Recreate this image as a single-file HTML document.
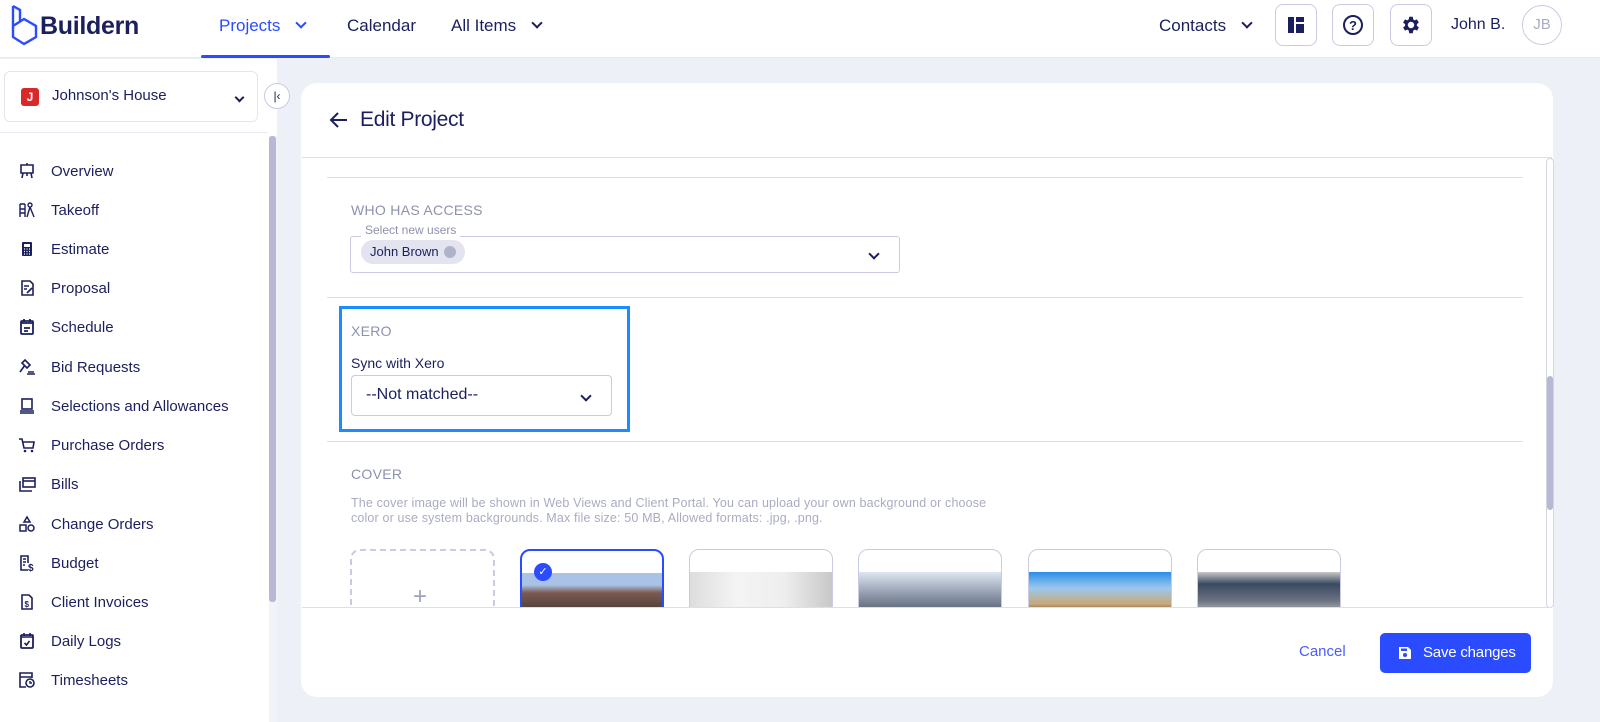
<!DOCTYPE html>
<html><head><meta charset="utf-8">
<style>
*{box-sizing:border-box;margin:0;padding:0}
body{width:1600px;height:722px;overflow:hidden;background:#eef0f8;font-family:"Liberation Sans",sans-serif;color:#1c1f5e;position:relative}
.abs{position:absolute}
.hdr{left:0;top:0;width:1600px;height:58px;background:#fff;border-bottom:1px solid #e6e8f2}
.nav{font-size:17px;top:16px}
.chev{display:inline-block;width:8px;height:8px;border-right:2px solid currentColor;border-bottom:2px solid currentColor;transform:rotate(45deg)}
.ib{width:42px;height:42px;border:1px solid #c9cbe4;border-radius:8px;top:4px;background:#fff;display:flex;align-items:center;justify-content:center}
.side{left:0;top:59px;width:277px;height:663px;background:#fff}
.item{left:18px;font-size:15px;display:flex;align-items:center;height:20px}
.item svg{width:18px;height:18px;margin-right:15px}
.card{left:301px;top:83px;width:1252px;height:614px;background:#fff;border-radius:16px}
.lbl{font-size:14px;color:#8e91ad;letter-spacing:.3px}
.line{height:1px;background:#dcdeea}
.th{top:549px;width:144px;height:60px;border:1px solid #c9cbe4;border-radius:10px 10px 0 0;overflow:hidden;background:#fff}
.th div{position:absolute;left:0;top:22px;width:100%;height:40px}
</style></head><body>
<div class="abs hdr"></div>
<svg class="abs" style="left:10px;top:4px" width="28" height="44" viewBox="0 0 28 44"><path d="M3 2 V33 L14 40 L26 33 V22 L14 15 L3 22 M3 2 L10 6 V18" fill="none" stroke="#2b4bff" stroke-width="2.4"/></svg>
<div class="abs" style="left:40px;top:12px;font-size:25px;font-weight:bold;color:#1c1f5e;letter-spacing:-0.3px">Buildern</div>
<div class="abs nav" style="left:219px;color:#2b4bff">Projects <span class="chev" style="margin-left:12px;position:relative;top:-4px"></span></div>
<div class="abs" style="left:201px;top:55px;width:129px;height:3px;background:#2b4bff;border-radius:2px"></div>
<div class="abs nav" style="left:347px">Calendar</div>
<div class="abs nav" style="left:451px">All Items <span class="chev" style="margin-left:12px;position:relative;top:-4px"></span></div>
<div class="abs nav" style="left:1159px">Contacts <span class="chev" style="margin-left:12px;position:relative;top:-4px"></span></div>
<div class="abs ib" style="left:1275px"><svg width="18" height="18"><rect x="1" y="1" width="6" height="16" fill="#1c1f5e"/><rect x="9" y="1" width="8" height="5" fill="#1c1f5e"/><rect x="9" y="8" width="8" height="9" fill="#1c1f5e"/></svg></div>
<div class="abs ib" style="left:1332px"><svg width="22" height="22"><circle cx="11" cy="11" r="9" fill="none" stroke="#1c1f5e" stroke-width="2"/><text x="11" y="16" font-size="13" font-weight="bold" text-anchor="middle" fill="#1c1f5e" font-family="Liberation Sans">?</text></svg></div>
<div class="abs ib" style="left:1390px"><svg width="22" height="22" viewBox="0 0 24 24"><path fill="#1c1f5e" d="M19.4 13a7.5 7.5 0 0 0 0-2l2.1-1.6-2-3.5-2.5 1a7 7 0 0 0-1.7-1L15 3h-4l-.4 2.9a7 7 0 0 0-1.7 1l-2.5-1-2 3.5L6.6 11a7.5 7.5 0 0 0 0 2l-2.2 1.6 2 3.5 2.5-1a7 7 0 0 0 1.7 1L11 21h4l.4-2.9a7 7 0 0 0 1.7-1l2.5 1 2-3.5zM13 15.5a3.5 3.5 0 1 1 0-7 3.5 3.5 0 0 1 0 7z" transform="translate(-1 0)"/></svg></div>
<div class="abs" style="left:1451px;top:16px;font-size:16px">John B.</div>
<div class="abs" style="left:1522px;top:5px;width:40px;height:40px;border:1px solid #c9cbe4;border-radius:50%;font-size:15px;color:#a9acc6;text-align:center;line-height:38px">JB</div>

<div class="abs side"></div>
<div class="abs" style="left:4px;top:71px;width:254px;height:51px;border:1px solid #e3e5ef;border-radius:6px;background:#fff"></div>
<div class="abs" style="left:21px;top:88px;width:18px;height:18px;background:#d8282a;border-radius:3px;color:#fff;font-size:12px;font-weight:bold;text-align:center;line-height:18px">J</div>
<div class="abs" style="left:52px;top:87px;font-size:15px">Johnson's House</div>
<div class="abs" style="left:236px;top:88px"><span class="chev" style="width:7px;height:7px"></span></div>
<div class="abs" style="left:264px;top:83px;width:26px;height:26px;border:1px solid #c9cbe4;border-radius:50%;background:#fff;font-size:12px;text-align:center;line-height:24px">|&lsaquo;</div>
<div class="abs" style="left:0;top:132px;width:268px;height:1px;background:#e6e8f2"></div>
<div class="abs" style="left:269px;top:136px;width:8px;height:586px;background:#f2f3f8"></div>
<div class="abs" style="left:269px;top:136px;width:7px;height:466px;background:#b6b8d4;border-radius:3px"></div>

<div class="abs item" style="top:161px"><svg viewBox="0 0 18 18"><path d="M3 3h12v8H3zM9 1v2M5 11l-1 5M13 11l1 5M9 11v3" fill="none" stroke="#1c1f5e" stroke-width="1.6"/></svg>Overview</div>
<div class="abs item" style="top:200px"><svg viewBox="0 0 18 18"><path d="M2 3h5M2 3v13M7 3v13M2 8h5M2 12h5M12 2a2 2 0 1 1 0 4 2 2 0 0 1 0-4M12 6l-3 10M12 6l4 10" fill="none" stroke="#1c1f5e" stroke-width="1.4"/></svg>Takeoff</div>
<div class="abs item" style="top:239px"><svg viewBox="0 0 18 18"><rect x="4" y="2" width="10" height="14" rx="1" fill="#1c1f5e"/><rect x="6" y="4" width="6" height="3" fill="#fff"/><path d="M6 9h1M8.5 9h1M11 9h1M6 11.5h1M8.5 11.5h1M11 11.5h1M6 14h1M8.5 14h1M11 14h1" stroke="#fff" stroke-width="1.2"/></svg>Estimate</div>
<div class="abs item" style="top:278px"><svg viewBox="0 0 18 18"><path d="M4 2h8l3 3v11H4zM6 7h5M6 10h3M9 14l5-5" fill="none" stroke="#1c1f5e" stroke-width="1.6"/></svg>Proposal</div>
<div class="abs item" style="top:317px"><svg viewBox="0 0 18 18"><rect x="3" y="3" width="12" height="13" rx="1" fill="none" stroke="#1c1f5e" stroke-width="1.8"/><path d="M3 5h12M6 1v3M12 1v3M6 10h6M6 13h4" stroke="#1c1f5e" stroke-width="1.8"/></svg>Schedule</div>
<div class="abs item" style="top:357px"><svg viewBox="0 0 18 18"><path d="M7 2l5 5-3 3-5-5zM7 7l-5 7M10 14h6M9 16h8" fill="none" stroke="#1c1f5e" stroke-width="1.6"/></svg>Bid Requests</div>
<div class="abs item" style="top:396px"><svg viewBox="0 0 18 18"><rect x="4" y="2" width="10" height="10" fill="none" stroke="#1c1f5e" stroke-width="1.6"/><path d="M2 14h14M2 16h14" stroke="#1c1f5e" stroke-width="1.6"/></svg>Selections and Allowances</div>
<div class="abs item" style="top:435px"><svg viewBox="0 0 18 18"><path d="M1 3h3l2 9h9l1-6H5" fill="none" stroke="#1c1f5e" stroke-width="1.6"/><circle cx="7" cy="15" r="1.3" fill="#1c1f5e"/><circle cx="14" cy="15" r="1.3" fill="#1c1f5e"/></svg>Purchase Orders</div>
<div class="abs item" style="top:474px"><svg viewBox="0 0 18 18"><path d="M2 6v10h12" fill="none" stroke="#1c1f5e" stroke-width="1.6"/><rect x="5" y="3" width="12" height="9" fill="none" stroke="#1c1f5e" stroke-width="1.6"/><path d="M5 6h12" stroke="#1c1f5e" stroke-width="1.6"/></svg>Bills</div>
<div class="abs item" style="top:514px"><svg viewBox="0 0 18 18"><path d="M9 2l3 5H6z" fill="none" stroke="#1c1f5e" stroke-width="1.5"/><rect x="2" y="10" width="6" height="6" fill="none" stroke="#1c1f5e" stroke-width="1.5"/><circle cx="13" cy="13" r="3" fill="none" stroke="#1c1f5e" stroke-width="1.5"/></svg>Change Orders</div>
<div class="abs item" style="top:553px"><svg viewBox="0 0 18 18"><path d="M10 9V2H3v14h7M5 5h3M5 8h3M5 11h2" fill="none" stroke="#1c1f5e" stroke-width="1.6"/><text x="10" y="17" font-size="10" font-weight="bold" fill="#1c1f5e" font-family="Liberation Sans">$</text></svg>Budget</div>
<div class="abs item" style="top:592px"><svg viewBox="0 0 18 18"><path d="M4 2h7l3 3v11H4z" fill="none" stroke="#1c1f5e" stroke-width="1.6"/><text x="6.5" y="14" font-size="8" font-weight="bold" fill="#1c1f5e" font-family="Liberation Sans">$</text></svg>Client Invoices</div>
<div class="abs item" style="top:631px"><svg viewBox="0 0 18 18"><rect x="3" y="3" width="12" height="13" rx="1" fill="none" stroke="#1c1f5e" stroke-width="1.8"/><path d="M3 5h12M6 1v3M12 1v3M6.5 11l2 2 3-4" fill="none" stroke="#1c1f5e" stroke-width="1.6"/></svg>Daily Logs</div>
<div class="abs item" style="top:670px"><svg viewBox="0 0 18 18"><path d="M8 16H2V2h12v5M2 6h12" fill="none" stroke="#1c1f5e" stroke-width="1.6"/><circle cx="12" cy="12" r="4" fill="none" stroke="#1c1f5e" stroke-width="1.6"/><path d="M12 10v2h2" stroke="#1c1f5e" stroke-width="1.4" fill="none"/></svg>Timesheets</div>

<div class="abs card"></div>
<svg class="abs" style="left:329px;top:111px" width="20" height="18"><path d="M18 9H3M9 2L2 9l7 7" fill="none" stroke="#1c1f5e" stroke-width="2"/></svg>
<div class="abs" style="left:360px;top:108px;font-size:21px;color:#1c1f5e;letter-spacing:-0.3px">Edit Project</div>
<div class="abs line" style="left:302px;top:157px;width:1250px"></div>
<div class="abs line" style="left:327px;top:177px;width:1196px"></div>
<div class="abs" style="left:1546px;top:158px;width:8px;height:450px;border:1px solid #d4d6e4;border-radius:4px;background:#fff"></div>
<div class="abs" style="left:1547px;top:376px;width:6px;height:134px;background:#b6b8d4;border-radius:3px"></div>

<div class="abs lbl" style="left:351px;top:202px">WHO HAS ACCESS</div>
<div class="abs" style="left:350px;top:236px;width:550px;height:37px;border:1px solid #c9cbe4;border-radius:3px"></div>
<div class="abs" style="left:361px;top:223px;padding:0 4px;background:#fff;font-size:12px;color:#8e91ad">Select new users</div>
<div class="abs" style="left:361px;top:240px;width:104px;height:24px;background:#e3e4ef;border-radius:12px;font-size:13px;line-height:24px;padding-left:9px">John Brown <span style="display:inline-block;width:12px;height:12px;border-radius:50%;background:#b0b2c8;vertical-align:-2px;margin-left:2px"></span></div>
<div class="abs" style="left:870px;top:245px"><span class="chev" style="width:8px;height:8px"></span></div>
<div class="abs line" style="left:327px;top:297px;width:1196px"></div>

<div class="abs" style="left:339px;top:306px;width:291px;height:126px;border:3px solid #1a8cff"></div>
<div class="abs lbl" style="left:351px;top:323px">XERO</div>
<div class="abs" style="left:351px;top:355px;font-size:14px;color:#1c1f5e">Sync with Xero</div>
<div class="abs" style="left:351px;top:375px;width:261px;height:41px;border:1px solid #c9cbe4;border-radius:4px"></div>
<div class="abs" style="left:366px;top:386px;font-size:16px;color:#1c1f5e">--Not matched--</div>
<div class="abs" style="left:582px;top:387px"><span class="chev" style="width:8px;height:8px"></span></div>
<div class="abs line" style="left:327px;top:441px;width:1196px"></div>

<div class="abs lbl" style="left:351px;top:466px">COVER</div>
<div class="abs" style="left:351px;top:496px;font-size:12.5px;color:#a9acc2;line-height:15px;width:720px;white-space:nowrap;letter-spacing:0.15px">The cover image will be shown in Web Views and Client Portal. You can upload your own background or choose<br>color or use system backgrounds. Max file size: 50 MB, Allowed formats: .jpg, .png.</div>
<div class="abs" style="left:350px;top:549px;width:145px;height:62px;border:2px dashed #c9cbe4;border-radius:10px 10px 0 0;border-bottom:none"></div>
<div class="abs" style="left:413px;top:583px;font-size:24px;color:#9ea1c0">+</div>
<div class="abs th" style="left:520px;border:2px solid #2b4bff"><div style="background:linear-gradient(#a9c2e6 0,#a9c2e6 30%,#7a5a4e 50%,#4a3a3a)"></div><span style="position:absolute;left:12px;top:12px;width:18px;height:18px;border-radius:50%;background:#2b4bff;color:#fff;font-size:11px;text-align:center;line-height:18px">✓</span></div>
<div class="abs th" style="left:689px"><div style="background:linear-gradient(90deg,#ddd,#f4f4f4,#eee,#c8c8c8)"></div></div>
<div class="abs th" style="left:858px"><div style="background:linear-gradient(#dde6f0,#8a95a8 60%,#5a6270)"></div></div>
<div class="abs th" style="left:1028px"><div style="background:linear-gradient(#2a8ee8,#9cc8ee 40%,#c8a878 80%,#6a5a40)"></div></div>
<div class="abs th" style="left:1197px"><div style="background:linear-gradient(#c8c8c8,#3a4a60 30%,#6a7080 70%,#b0b0b0)"></div></div>
<div class="abs" style="left:302px;top:607px;width:1250px;height:90px;background:#fff;border-top:1px solid #dcdeea;border-radius:0 0 16px 16px"></div>
<div class="abs" style="left:1299px;top:643px;font-size:15px;color:#4a5cff">Cancel</div>
<div class="abs" style="left:1380px;top:633px;width:151px;height:40px;background:#2b4bff;border-radius:5px;color:#fff;font-size:15px;line-height:40px;padding-left:43px;letter-spacing:-0.2px;white-space:nowrap">Save changes</div>
<svg class="abs" style="left:1398px;top:646px" width="14" height="14"><path d="M1 1h9l3 3v9H1z" fill="#fff"/><circle cx="7" cy="9" r="2" fill="#2b4bff"/><rect x="3" y="2.5" width="6" height="2.5" fill="#2b4bff"/></svg>
</body></html>
